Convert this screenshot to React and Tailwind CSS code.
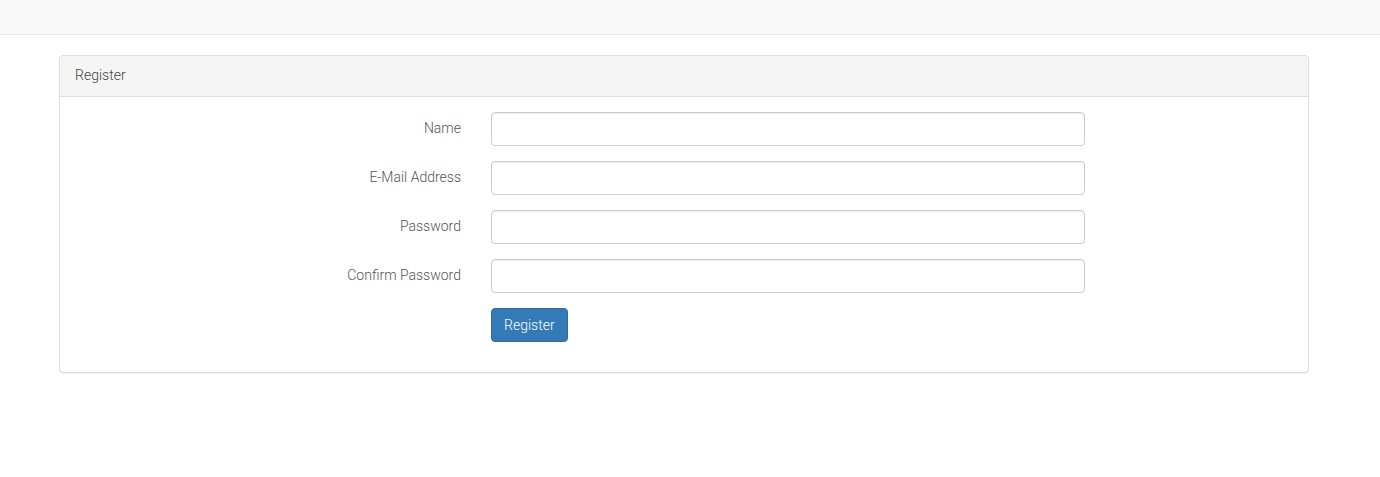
import React from "react";

const fields = [
  { label: "Name", type: "text" },
  { label: "E-Mail Address", type: "email" },
  { label: "Password", type: "password" },
  { label: "Confirm Password", type: "password" },
];

const App = () => {
  return (
    <div className="min-h-[477px] bg-white font-['Roboto',sans-serif] text-[14px] font-light text-[#4f565a]">
      <nav className="h-[35px] border-b border-[#e7e7e7] bg-[#f8f8f8]" />

      <div className="ml-[59px] mt-[20px] w-[1250px] rounded-[4px] border border-[#dddddd] bg-white shadow-[0_1px_1px_rgba(0,0,0,0.05)]">
        <div className="h-[41px] rounded-t-[3px] border-b border-[#dddddd] bg-[#f5f5f5] px-[15px] pt-[9px] leading-[20px] text-[#444]">
          Register
        </div>

        <form className="p-[15px]" onSubmit={(e) => e.preventDefault()}>
          {fields.map((f) => (
            <div key={f.label} className="mb-[15px] flex">
              <label className="w-[386px] pt-[6px] text-right leading-[20px]">
                {f.label}
              </label>
              <div className="ml-[30px] w-[594px]">
                <input
                  type={f.type}
                  className="block h-[34px] w-full rounded-[4px] border border-[#cccccc] bg-white px-[12px] py-[6px] text-[#555] shadow-[inset_0_1px_1px_rgba(0,0,0,0.075)] outline-none"
                />
              </div>
            </div>
          ))}
          <div className="mb-[15px] flex">
            <div className="ml-[416px]">
              <button
                type="submit"
                className="h-[34px] rounded-[4px] border border-[#2e6da4] bg-[#337ab7] px-[12px] font-light leading-[20px] text-white"
              >
                Register
              </button>
            </div>
          </div>
        </form>
      </div>
    </div>
  );
};

export default App;
